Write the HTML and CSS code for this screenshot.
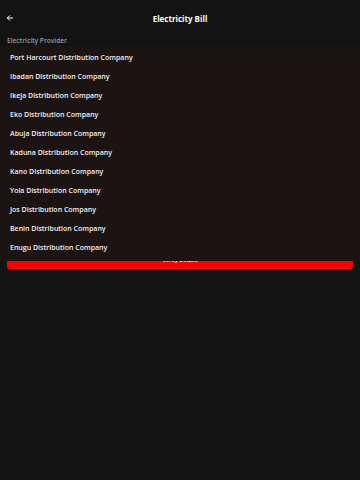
FILE: index.html
```html
<!DOCTYPE html>
<html lang="en">
<head>
  <meta charset="UTF-8" />
  <meta name="viewport" content="width=device-width, initial-scale=1.0"/>
  <title>Electricity Bill</title>
  <link rel="stylesheet" href="styles.css">
</head>
<body>
  <div class="page">
    <header class="topbar">
      <button class="back" aria-label="Back">
        <svg viewBox="0 0 24 24" width="8" height="8" fill="none" stroke="#fff" stroke-width="3" stroke-linecap="round" stroke-linejoin="round">
          <path d="M20 12H5"/>
          <path d="M11 5l-7 7 7 7"/>
        </svg>
      </button>
      <h1>Electricity Bill</h1>
      <span class="spacer"></span>
    </header>

    <form class="form">
      <label class="field-label">Electricity Provider</label>
      <div class="field">
        <div class="select"></div>

        <ul class="menu">
          <li>Port Harcourt Distribution Company</li>
          <li>Ibadan Distribution Company</li>
          <li>Ikeja Distribution Company</li>
          <li>Eko Distribution Company</li>
          <li>Abuja Distribution Company</li>
          <li>Kaduna Distribution Company</li>
          <li>Kano Distribution Company</li>
          <li>Yola Distribution Company</li>
          <li>Jos Distribution Company</li>
          <li>Benin Distribution Company</li>
          <li>Enugu Distribution Company</li>
        </ul>
      </div>

      <button type="button" class="submit">Verify Details</button>
    </form>
  </div>
</body>
</html>
```

FILE: styles.css
```css
body {
  margin: 0;
  background: #131313;
  color: #fff;
  font-family: 'Open Sans', 'Liberation Sans', sans-serif;
}

.page {
  width: 360px;
  height: 480px;
}

.topbar {
  display: flex;
  align-items: center;
  height: 36px;
  padding: 0 5px;
}

.back {
  width: 10px;
  height: 10px;
  padding: 0;
  border: none;
  background: none;
  display: flex;
  align-items: center;
  justify-content: center;
}

.spacer {
  width: 10px;
}

h1 {
  flex: 1;
  margin: 0;
  text-align: center;
  font-size: 8px;
  font-weight: 700;
}

.form {
  padding: 0 7px;
}

.field-label {
  display: block;
  font-size: 6.6px;
  font-weight: 600;
  color: #9a9a9a;
  height: 10px;
  line-height: 10px;
}

.field {
  position: relative;
}

.select {
  height: 22px;
  border-radius: 3px;
  background: #1a1a1a;
}

.menu {
  position: absolute;
  top: 0;
  left: -7px;
  width: 360px;
  height: 213px;
  margin: 0;
  padding: 2px 0 0;
  list-style: none;
  background: #1c1313;
  z-index: 2;
}

.menu li {
  height: 19px;
  line-height: 19px;
  padding: 0 10px;
  font-size: 7px;
  font-weight: 600;
  color: #f2f2f2;
}

.submit {
  display: block;
  width: 100%;
  height: 19px;
  margin-top: 182px;
  border: none;
  border-radius: 3px;
  background: #ff0000;
  color: #fff;
  font-family: inherit;
  font-size: 5.5px;
  font-weight: 600;
  line-height: 12px;
  padding: 0;
  text-align: center;
  align-content: start;
}
```
